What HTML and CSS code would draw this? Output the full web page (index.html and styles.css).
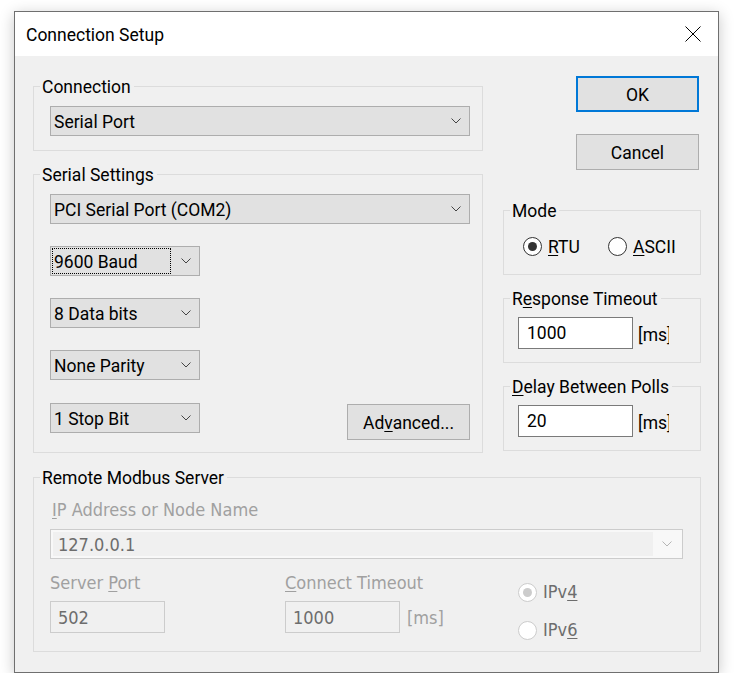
FILE: index.html
```html
<!DOCTYPE html>
<html>
<head>
<meta charset="utf-8">
<title>Connection Setup</title>
<link rel="stylesheet" href="styles.css">
</head>
<body>
<div class="window">
  <div class="titlebar">
    <span class="title">Connection Setup</span>
    <svg class="close" viewBox="0 0 16 16"><path d="M0.5 0.5 L15.5 15.5 M15.5 0.5 L0.5 15.5" stroke="#000" stroke-width="1" fill="none"/></svg>
  </div>
  <div class="content">
    <div class="main">
      <div class="leftcol">
        <fieldset class="group">
          <legend>Connection</legend>
          <div class="gbody g-conn">
            <div class="combo"><span class="val">Serial Port</span><svg class="chev" viewBox="0 0 10 6"><polyline points="0.5,0.5 5,5 9.5,0.5" fill="none" stroke="#444" stroke-width="1"/></svg></div>
          </div>
        </fieldset>
        <fieldset class="group">
          <legend>Serial Settings</legend>
          <div class="gbody g-serial">
            <div class="combo"><span class="val">PCI Serial Port (COM2)</span><svg class="chev" viewBox="0 0 10 6"><polyline points="0.5,0.5 5,5 9.5,0.5" fill="none" stroke="#444" stroke-width="1"/></svg></div>
            <div class="combo small focus"><span class="val">9600 Baud</span><svg class="chev" viewBox="0 0 10 6"><polyline points="0.5,0.5 5,5 9.5,0.5" fill="none" stroke="#444" stroke-width="1"/></svg></div>
            <div class="combo small"><span class="val">8 Data bits</span><svg class="chev" viewBox="0 0 10 6"><polyline points="0.5,0.5 5,5 9.5,0.5" fill="none" stroke="#444" stroke-width="1"/></svg></div>
            <div class="combo small"><span class="val">None Parity</span><svg class="chev" viewBox="0 0 10 6"><polyline points="0.5,0.5 5,5 9.5,0.5" fill="none" stroke="#444" stroke-width="1"/></svg></div>
            <div class="row-last">
              <div class="combo small"><span class="val">1 Stop Bit</span><svg class="chev" viewBox="0 0 10 6"><polyline points="0.5,0.5 5,5 9.5,0.5" fill="none" stroke="#444" stroke-width="1"/></svg></div>
              <button class="btn adv">Ad<u>v</u>anced...</button>
            </div>
          </div>
        </fieldset>
      </div>
      <div class="rightcol">
        <button class="btn default ok">OK</button>
        <button class="btn cancel">Cancel</button>
        <fieldset class="group mode">
          <legend>Mode</legend>
          <div class="gbody g-mode">
            <span class="radio rtu"><span class="rdot on"></span><span class="rtext"><u>R</u>TU</span></span>
            <span class="radio"><span class="rdot"></span><span class="rtext"><u>A</u>SCII</span></span>
          </div>
        </fieldset>
        <fieldset class="group resp">
          <legend>R<u>e</u>sponse Timeout</legend>
          <div class="gbody g-edit">
            <div class="edit">1000</div>
            <span class="ms">[ms]</span>
          </div>
        </fieldset>
        <fieldset class="group resp">
          <legend><u>D</u>elay Between Polls</legend>
          <div class="gbody g-edit">
            <div class="edit">20</div>
            <span class="ms">[ms]</span>
          </div>
        </fieldset>
      </div>
    </div>
    <fieldset class="group remote">
      <legend>Remote Modbus Server</legend>
      <div class="gbody g-remote">
        <div class="dlabel iplabel"><u>I</u>P Address or Node Name</div>
        <div class="dcombo">
          <div class="field">127.0.0.1</div>
          <div class="drop"><svg class="chev" viewBox="0 0 10 6"><polyline points="0.5,0.5 5,5 9.5,0.5" fill="none" stroke="#b5b5b5" stroke-width="1"/></svg></div>
        </div>
        <div class="drow">
          <div class="dcol c1">
            <div class="dlabel">Server <u>P</u>ort</div>
            <div class="dedit">502</div>
          </div>
          <div class="dcol c2">
            <div class="dlabel"><u>C</u>onnect Timeout</div>
            <div class="dedit-row">
              <div class="dedit">1000</div>
              <span class="dms">[ms]</span>
            </div>
          </div>
          <div class="dcol c3">
            <span class="dradio r4"><span class="rdot dis on"></span><span>IPv<u>4</u></span></span>
            <span class="dradio r6"><span class="rdot dis"></span><span>IPv<u>6</u></span></span>
          </div>
        </div>
      </div>
    </fieldset>
  </div>
</div>
</body>
</html>
```

FILE: styles.css
```css
* {
  box-sizing: border-box;
}

html,
body {
  margin: 0;
  padding: 0;
  background: #ffffff;
}

body {
  font-family: Roboto, "Noto Sans", sans-serif;
  font-size: 17.5px;
  color: #000;
}

u {
  text-decoration-thickness: 1px;
  text-underline-offset: 2px;
}

.window {
  margin: 11px 0 0 14px;
  width: 705px;
  height: 662px;
  border: 1px solid #6f6f6f;
  background: #f0f0f0;
  box-shadow: 0 3px 14px rgba(0, 0, 0, 0.22);
  display: flex;
  flex-direction: column;
}

.titlebar {
  height: 44px;
  flex: none;
  background: #ffffff;
  display: flex;
  align-items: center;
  justify-content: space-between;
  padding: 0 17px 0 11px;
}

.title {
  line-height: 24px;
  padding-top: 2px;
}

.close {
  width: 16px;
  height: 16px;
  display: block;
  margin-top: -1px;
}

.content {
  padding: 18px 17px 0 18px;
}

.main {
  display: flex;
  gap: 20px;
}

.leftcol {
  width: 450px;
  display: flex;
  flex-direction: column;
  gap: 11px;
}

.rightcol {
  width: 198px;
  display: flex;
  flex-direction: column;
}

/* group boxes */
.group {
  margin: 0;
  padding: 0;
  border: 1px solid #dcdcdc;
  min-width: 0;
}

.group > legend {
  margin-left: 6px;
  padding: 1px 3px 0 2px;
  height: 24px;
  line-height: 24px;
}

.g-conn {
  padding: 8px 12px 14px 16px;
}

.g-serial {
  padding: 8px 12px 12px 16px;
  display: flex;
  flex-direction: column;
  gap: 22px;
}

.row-last {
  margin-top: 1px;
  display: flex;
  justify-content: space-between;
  align-items: flex-start;
}

/* combo boxes */
.combo {
  height: 30px;
  border: 1px solid #adadad;
  background: #e1e1e1;
  display: flex;
  align-items: center;
  justify-content: space-between;
  padding: 0 8px 0 3px;
  white-space: nowrap;
}

.combo .val {
  padding-top: 2px;
}

.combo.small {
  width: 150px;
}

.combo.focus {
  padding-left: 1px;
}

.combo.focus .val {
  width: 119px;
  height: 26px;
  border: 1px dotted #000;
  padding: 2px 0 0 1px;
  display: flex;
  align-items: center;
}

.chev {
  width: 10px;
  height: 6px;
  display: block;
}

/* buttons */
.btn {
  width: 123px;
  height: 36px;
  border: 1px solid #adadad;
  background: #e1e1e1;
  font: inherit;
  color: #000;
  padding: 2px 0 0 0;
  margin: 0;
}

.btn.default {
  border: 2px solid #0078d7;
}

.btn.adv {
  margin-top: 1px;
}

.ok {
  align-self: flex-end;
  margin-top: 2px;
  margin-right: 2px;
}

.cancel {
  align-self: flex-end;
  margin-top: 22px;
  margin-right: 2px;
}

.mode {
  margin-top: 28px;
}

.resp {
  margin-top: 11px;
}

.g-mode {
  padding: 12px 0 16px 19px;
  display: flex;
}

.radio {
  display: inline-flex;
  align-items: center;
  gap: 6px;
  line-height: 24px;
  height: 24px;
}

.rtext {
  padding-top: 2px;
}

.radio.rtu {
  width: 85px;
}

.rdot {
  width: 19px;
  height: 19px;
  border: 1px solid #333;
  border-radius: 50%;
  background: #fff;
  display: flex;
  align-items: center;
  justify-content: center;
  flex: none;
}

.rdot.on::after {
  content: "";
  width: 9px;
  height: 9px;
  border-radius: 50%;
  background: #333;
}

.rdot.dis {
  border-color: #cccccc;
}

.rdot.dis.on::after {
  background: #cccccc;
}

/* edits */
.g-edit {
  padding: 7px 0 13px 14px;
  display: flex;
  align-items: flex-start;
}

.edit {
  width: 115px;
  height: 32px;
  border: 1px solid #7a7a7a;
  background: #fff;
  padding-left: 8px;
  display: flex;
  align-items: center;
}

.ms {
  width: 31px;
  margin-left: 5px;
  margin-top: 6px;
  line-height: 24px;
  overflow: hidden;
  white-space: nowrap;
}

/* remote (disabled) */
.remote {
  margin-top: 12px;
}

.g-remote {
  padding: 9px 17px 18px 16px;
}

.dlabel,
.dedit,
.dcombo,
.dms,
.dradio {
  font-family: "DejaVu Sans Condensed", "DejaVu Sans", sans-serif;
  font-stretch: condensed;
  font-size: 18px;
}

.dlabel {
  color: #a0a0a0;
  line-height: 24px;
  white-space: nowrap;
}

.iplabel {
  padding-left: 2px;
}

.dcombo {
  margin-top: 7px;
  height: 30px;
  border: 1px solid #cccccc;
  background: #f8f8f8;
  padding: 2px;
  display: flex;
}

.dcombo .field {
  flex: 1;
  background: #f0f0f0;
  color: #6d6d6d;
  padding-left: 5px;
  display: flex;
  align-items: center;
}

.dcombo .drop {
  width: 27px;
  display: flex;
  align-items: center;
  padding-left: 9px;
}

.drow {
  margin-top: 12px;
  height: 62px;
  display: flex;
  align-items: flex-start;
}

.dcol.c1 {
  width: 235px;
}

.dcol.c2 {
  width: 233px;
}

.dcol.c3 {
  display: flex;
  flex-direction: column;
}

.dedit {
  margin-top: 6px;
  width: 115px;
  height: 32px;
  border: 1px solid #cccccc;
  background: #f0f0f0;
  color: #6d6d6d;
  padding-left: 7px;
  display: flex;
  align-items: center;
}

.dedit-row {
  display: flex;
  align-items: flex-start;
}

.dms {
  color: #a0a0a0;
  margin-left: 7px;
  margin-top: 11px;
  line-height: 24px;
}

.dradio {
  display: inline-flex;
  align-items: center;
  gap: 6px;
  height: 24px;
  line-height: 24px;
  color: #6d6d6d;
}

.dradio.r4 {
  margin-top: 9px;
}

.dradio.r6 {
  margin-top: 14px;
}
```
